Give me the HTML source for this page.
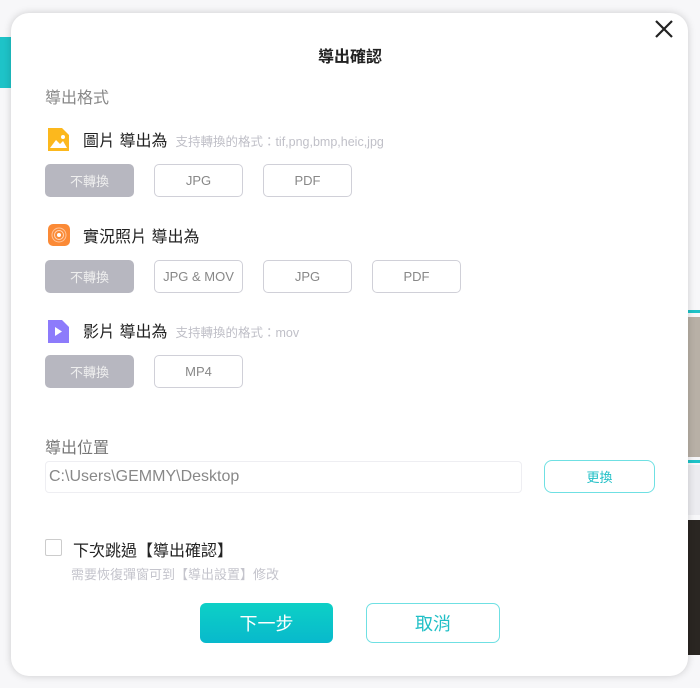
<!DOCTYPE html>
<html><head><meta charset="utf-8"><style>
*{margin:0;padding:0;box-sizing:border-box}
body{width:700px;height:688px;overflow:hidden;background:#f7f7f9;font-family:"Liberation Sans","Noto Sans CJK TC",sans-serif;position:relative}
.abs{position:absolute}
.dlg{left:11px;top:13px;width:677px;height:663px;background:#fff;border-radius:18px;box-shadow:0 0 8px rgba(0,0,0,.18)}
.t{color:#222}
.btn{position:absolute;height:33px;border:1.5px solid #d0d0d8;border-radius:5px;background:#fff;color:#888;font-size:13px;display:flex;align-items:center;justify-content:center}
.btn.g{background:#b7b7c0;border-color:#b7b7c0;color:#eee}
.lab{position:absolute;font-size:16px;color:#222}
.hint{font-size:12.5px;color:#c0c0c8;margin-left:8px}
</style></head><body>
<div class="abs" style="left:0;top:37px;width:14px;height:51px;background:#1ec3c8"></div>
<div class="abs" style="left:686px;top:310px;width:14px;height:3px;background:#1ec3c8"></div>
<div class="abs" style="left:686px;top:317px;width:14px;height:140px;background:#b8b0a6"></div>
<div class="abs" style="left:686px;top:460px;width:14px;height:3px;background:#1ec3c8"></div>
<div class="abs" style="left:686px;top:465px;width:14px;height:50px;background:#ececf0"></div>
<div class="abs" style="left:686px;top:520px;width:14px;height:135px;background:#2a2622"></div>
<div class="abs dlg"></div>
<svg class="abs" style="left:654px;top:19px" width="20" height="20" viewBox="0 0 20 20"><path d="M2 2L18 18M18 2L2 18" stroke="#222" stroke-width="2.2"/></svg>
<div class="abs t" style="left:0;width:700px;top:43px;text-align:center;font-size:16px;font-weight:bold">導出確認</div>
<div class="abs" style="left:45px;top:84px;font-size:16px;color:#888">導出格式</div>

<svg class="abs" style="left:48px;top:128px" width="21" height="23" viewBox="0 0 21 23"><path d="M0 0H14L21 7V23H0Z" fill="#fcb81d"/><path d="M2 20L8 12L12 16L15 13L19 20Z" fill="#fff"/><circle cx="15" cy="9" r="2" fill="#fff"/></svg>
<div class="lab" style="left:83px;top:127px">圖片 導出為<span class="hint">支持轉換的格式：tif,png,bmp,heic,jpg</span></div>
<div class="btn g" style="left:45px;top:164px;width:89px">不轉換</div>
<div class="btn" style="left:154px;top:164px;width:89px">JPG</div>
<div class="btn" style="left:263px;top:164px;width:89px">PDF</div>

<svg class="abs" style="left:48px;top:224px" width="22" height="22" viewBox="0 0 22 22"><rect width="22" height="22" rx="5" fill="#fb8a36"/><circle cx="11" cy="11" r="7" fill="none" stroke="#ffc49a" stroke-width="1"/><circle cx="11" cy="11" r="4.5" fill="none" stroke="#ffd6b8" stroke-width="1"/><circle cx="11" cy="11" r="2" fill="#fff"/></svg>
<div class="lab" style="left:83px;top:223px">實況照片 導出為</div>
<div class="btn g" style="left:45px;top:260px;width:89px">不轉換</div>
<div class="btn" style="left:154px;top:260px;width:89px">JPG &amp; MOV</div>
<div class="btn" style="left:263px;top:260px;width:89px">JPG</div>
<div class="btn" style="left:372px;top:260px;width:89px">PDF</div>

<svg class="abs" style="left:48px;top:320px" width="21" height="23" viewBox="0 0 21 23"><path d="M0 0H14L21 7V23H0Z" fill="#8d7bfb"/><path d="M7 7L14 11.5L7 16Z" fill="#fff"/></svg>
<div class="lab" style="left:83px;top:318px">影片 導出為<span class="hint">支持轉換的格式：mov</span></div>
<div class="btn g" style="left:45px;top:355px;width:89px">不轉換</div>
<div class="btn" style="left:154px;top:355px;width:89px">MP4</div>

<div class="abs" style="left:45px;top:434px;font-size:16px;color:#777">導出位置</div>
<div class="abs" style="left:45px;top:461px;width:477px;height:32px;border:1px solid #eeeef2;border-radius:4px;font-size:16px;color:#888;padding:6px 3px">C:\Users\GEMMY\Desktop</div>
<div class="btn" style="left:544px;top:460px;width:111px;height:33px;border-color:#6fe0e3;color:#20bfc6;border-radius:8px">更換</div>

<div class="abs" style="left:45px;top:539px;width:17px;height:17px;border:1px solid #ccc;border-radius:2px"></div>
<div class="abs" style="left:73px;top:537px;font-size:16px;color:#222">下次跳過【導出確認】</div>
<div class="abs" style="left:71px;top:564px;font-size:13px;color:#c4c4cc">需要恢復彈窗可到【導出設置】修改</div>

<div class="abs" style="left:200px;top:603px;width:133px;height:40px;border-radius:6px;background:linear-gradient(#0dd0c6,#08b9cc);color:#fff;font-size:18px;display:flex;align-items:center;justify-content:center">下一步</div>
<div class="abs" style="left:366px;top:603px;width:134px;height:40px;border-radius:7px;border:1.5px solid #6fe0e3;color:#20bfc6;font-size:18px;display:flex;align-items:center;justify-content:center">取消</div>
</body></html>
